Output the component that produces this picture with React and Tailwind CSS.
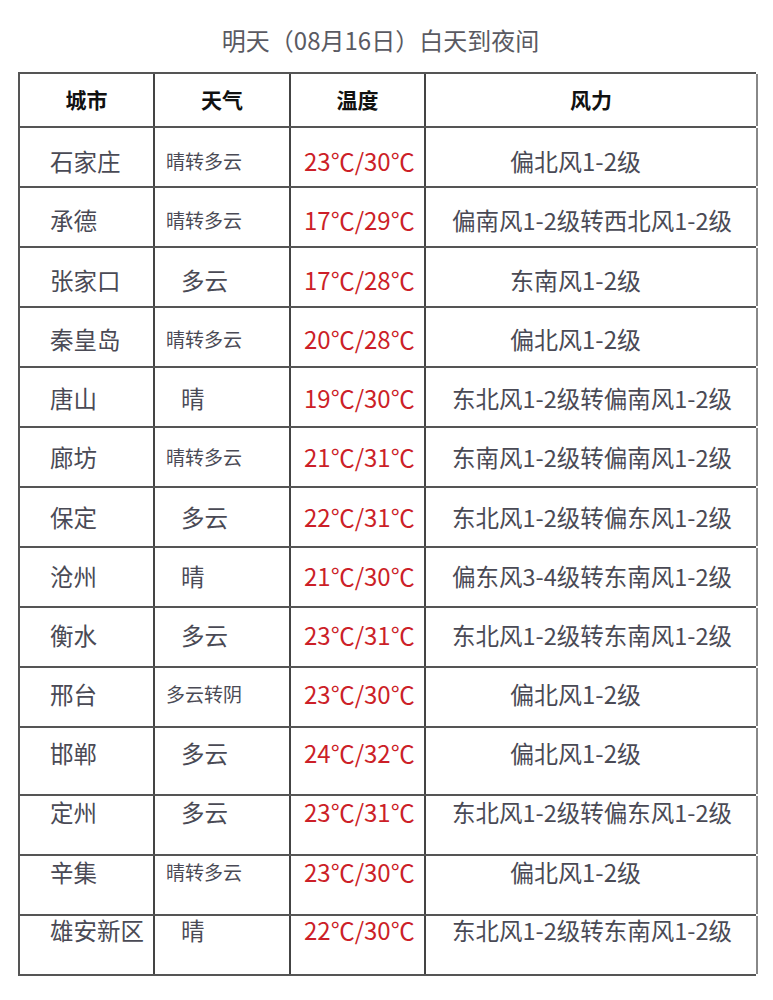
const rows = [
  { city: '石家庄', weather: '晴转多云', small: true, temp: '23℃/30℃', wind: '偏北风1-2级', long: false, h: 'h-[60px]', pt: 'pt-[20px]' },
  { city: '承德', weather: '晴转多云', small: true, temp: '17℃/29℃', wind: '偏南风1-2级转西北风1-2级', long: true, h: 'h-[60px]', pt: 'pt-[19px]' },
  { city: '张家口', weather: '多云', small: false, temp: '17℃/28℃', wind: '东南风1-2级', long: false, h: 'h-[60px]', pt: 'pt-[19px]' },
  { city: '秦皇岛', weather: '晴转多云', small: true, temp: '20℃/28℃', wind: '偏北风1-2级', long: false, h: 'h-[60px]', pt: 'pt-[18px]' },
  { city: '唐山', weather: '晴', small: false, temp: '19℃/30℃', wind: '东北风1-2级转偏南风1-2级', long: true, h: 'h-[60px]', pt: 'pt-[17px]' },
  { city: '廊坊', weather: '晴转多云', small: true, temp: '21℃/31℃', wind: '东南风1-2级转偏南风1-2级', long: true, h: 'h-[60px]', pt: 'pt-[16px]' },
  { city: '保定', weather: '多云', small: false, temp: '22℃/31℃', wind: '东北风1-2级转偏东风1-2级', long: true, h: 'h-[60px]', pt: 'pt-[16px]' },
  { city: '沧州', weather: '晴', small: false, temp: '21℃/30℃', wind: '偏东风3-4级转东南风1-2级', long: true, h: 'h-[60px]', pt: 'pt-[15px]' },
  { city: '衡水', weather: '多云', small: false, temp: '23℃/31℃', wind: '东北风1-2级转东南风1-2级', long: true, h: 'h-[60px]', pt: 'pt-[14px]' },
  { city: '邢台', weather: '多云转阴', small: true, temp: '23℃/30℃', wind: '偏北风1-2级', long: false, h: 'h-[60px]', pt: 'pt-[13px]' },
  { city: '邯郸', weather: '多云', small: false, temp: '24℃/32℃', wind: '偏北风1-2级', long: false, h: 'h-[68px]', pt: 'pt-[12px]' },
  { city: '定州', weather: '多云', small: false, temp: '23℃/31℃', wind: '东北风1-2级转偏东风1-2级', long: true, h: 'h-[60px]', pt: 'pt-[3px]' },
  { city: '辛集', weather: '晴转多云', small: true, temp: '23℃/30℃', wind: '偏北风1-2级', long: false, h: 'h-[60px]', pt: 'pt-[3px]' },
  { city: '雄安新区', weather: '晴', small: false, temp: '22℃/30℃', wind: '东北风1-2级转东南风1-2级', long: true, h: 'h-[60px]', pt: 'pt-[1px]' },
]

const cols = 'grid grid-cols-[135px_136px_135px_332px]'

export default function App() {
  return (
    <div className="w-[773px] h-[1000px] bg-white font-['Noto_Sans_CJK_SC',sans-serif]">
      <div className="h-[72px] pt-[25px] pr-[12px] text-center text-[24px] leading-[30px] text-[#5a5a62]">
        明天（08月16日）白天到夜间
      </div>

      <div className="ml-[18px] w-[738px] border-t-2 border-l-2 border-[#555]">
        <div className={`${cols} h-[54px] border-b-2 border-[#555]`}>
          {['城市', '天气', '温度', '风力'].map((t, i) => (
            <div
              key={t}
              className={`flex items-center justify-center text-[21px] font-bold text-[#111] border-r-2 ${i === 3 ? 'border-[#888]' : 'border-[#444]'}`}
            >
              {t}
            </div>
          ))}
        </div>

        {rows.map((r) => (
          <div key={r.city} className={`${cols} ${r.h} border-b-2 border-[#555] text-[#4a4a55] leading-[26px]`}>
            <div className={`${r.pt} pl-[30px] text-[23.5px] border-r-2 border-[#444]`}>{r.city}</div>
            <div className={`${r.pt} border-r-2 border-[#444] ${r.small ? 'pl-[11px] text-[19px]' : 'pl-[26px] text-[23.5px]'}`}>
              {r.weather}
            </div>
            <div className={`${r.pt} pl-[13px] text-[24px] text-[#cc1f28] border-r-2 border-[#444]`}>{r.temp}</div>
            <div className={`${r.pt} border-r-2 border-[#888] ${r.long ? 'pl-[26px] text-[23.5px]' : 'pl-[84px] text-[24px]'}`}>
              {r.wind}
            </div>
          </div>
        ))}
      </div>
    </div>
  )
}
